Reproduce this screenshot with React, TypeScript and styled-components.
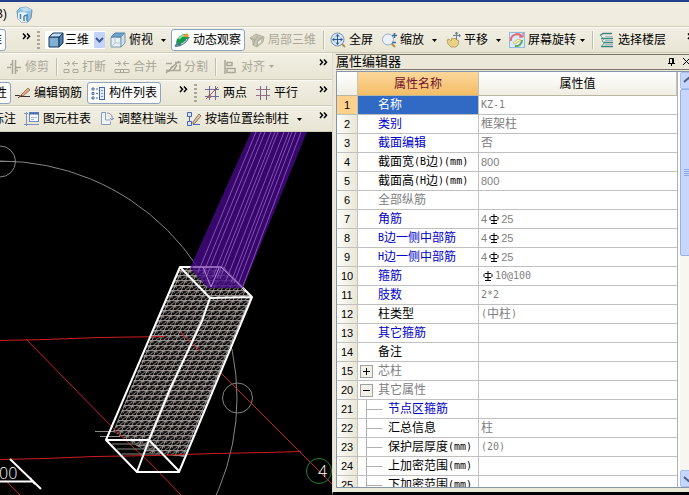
import React from 'react';
import styled, { createGlobalStyle, css } from 'styled-components';

const GlobalStyle = createGlobalStyle`
  * { box-sizing: border-box; }
  html, body { margin: 0; background: #ece9d8; }
  body, button, select, table {
    font-family: "Liberation Sans", "Noto Sans CJK SC", sans-serif;
    font-size: 12px;
    line-height: 16px;
  }
`;

const Page = styled.div`
  height: 100vh;
  display: flex;
  flex-direction: column;
  overflow: hidden;
  color: #000;
  cursor: default;
`;

const MenuBar = styled.header`
  flex: none;
  height: 27px;
  display: flex;
  align-items: center;
  gap: 9px;
  border-top: 2px solid #25418c;
  border-bottom: 1px solid #d2cebc;
  background: #f0ede0;
`;

const Toolbar = styled.div<{ $height?: number }>`
  flex: none;
  height: ${p => p.$height ?? 26}px;
  display: flex;
  align-items: center;
  overflow: hidden;
  border-top: 1px solid #fbfaf4;
  border-bottom: 1px solid #d0ccba;
  background: linear-gradient(#f1efe3, #e8e5d4);
`;

const pressedStyle = css`
  height: 22px;
  padding: 0 3px 0 2px;
  border: 1px solid #8fa3be;
  border-radius: 3px;
  background: #fcfcfb;
`;

const ToolButton = styled.button<{ $before?: number; $pressed?: boolean }>`
  flex: none;
  display: flex;
  align-items: center;
  gap: 3px;
  margin: 0 0 0 ${p => p.$before ?? 0}px;
  padding: 0;
  border: 0;
  background: none;
  color: inherit;
  white-space: nowrap;
  &:disabled { color: #aaa797; }
  ${p => p.$pressed && pressedStyle}
`;

const Cut = styled.div<{ $width: number; $side?: 'start' | 'end' }>`
  flex: none;
  width: ${p => p.$width}px;
  display: flex;
  justify-content: flex-${p => p.$side ?? 'end'};
  overflow: hidden;
  white-space: nowrap;
`;

const Separator = styled.span<{ $before?: number }>`
  flex: none;
  width: 2px;
  height: 18px;
  margin-left: ${p => p.$before ?? 7}px;
  border-left: 1px solid #c2beac;
  border-right: 1px solid #f8f6ee;
`;

const Grip = styled.span<{ $before?: number }>`
  flex: none;
  width: 3px;
  height: 18px;
  margin-left: ${p => p.$before ?? 6}px;
  background: repeating-linear-gradient(#aaa796 0 2px, transparent 2px 4px);
`;

const IconButton = styled.button<{ $before?: number; $end?: boolean }>`
  flex: none;
  display: flex;
  margin: 0 ${p => (p.$end ? 4 : 0)}px 0 ${p => (p.$end ? 'auto' : `${p.$before ?? 8}px`)};
  padding: 0;
  border: 0;
  background: none;
  color: inherit;
  &:disabled { color: #aaa797; }
`;

const MoreButton = styled(IconButton)`
  align-self: flex-start;
  padding-top: 5px;
`;

const ViewPicker = styled.label`
  flex: none;
  height: 18px;
  display: flex;
  align-items: center;
  gap: 1px;
  margin-left: 5px;
  padding-left: 3px;
  background: #fff;
`;

const ViewSelect = styled.select`
  width: 28px;
  height: 18px;
  padding: 0;
  border: 0;
  appearance: none;
  background: none;
  color: inherit;
`;

const Workspace = styled.div`
  flex: 1;
  min-height: 0;
  display: grid;
  grid-template-columns: minmax(0, 332fr) minmax(0, 357fr);
`;

const LeftPane = styled.div`
  display: flex;
  flex-direction: column;
  min-height: 0;
`;

const Viewport = styled.main`
  flex: 1;
  min-height: 0;
  background: #000;
  svg { display: block; width: 100%; height: 100%; }
`;

const RightPane = styled.section`
  min-height: 0;
  display: flex;
  flex-direction: column;
  padding: 1px 0 0 3px;
  border-left: 1px solid #d9dcd4;
  border-bottom: 3px solid #000;
  background: #ece9d8;
`;

const PanelTitle = styled.div`
  flex: none;
  height: 16px;
  display: flex;
  align-items: center;
  border-top: 1px solid #77756c;
  border-bottom: 1px solid #77756c;
  background: #ebe8da;
  overflow: hidden;
`;

const TitleText = styled.h2`
  flex: 1;
  margin: 0;
  font-size: 13px;
  line-height: 14px;
  font-weight: 400;
`;

const Grid = styled.div`
  flex: 1;
  min-height: 0;
  display: flex;
  margin: 1px 0 4px;
  border: 1px solid #8296a8;
  border-right: 0;
  background: #fff;
`;

const TableArea = styled.div`
  flex: 1;
  min-width: 0;
  overflow: hidden;
  border-right: 1px solid #a9b4b8;
`;

const Table = styled.table`
  width: 100%;
  table-layout: fixed;
  border-collapse: separate;
  border-spacing: 0;
`;

const NumberCol = styled.col`width: 21px;`;
const NameCol = styled.col`width: 121px;`;

const HeadCell = styled.th<{ $active?: boolean }>`
  height: 24px;
  padding: 0;
  font-weight: 400;
  border-right: 1px solid #c6c3b4;
  border-bottom: 1px solid #b9b6a6;
  color: ${p => (p.$active ? '#70102c' : '#000')};
  background: ${p => (p.$active ? 'linear-gradient(#fbd79b, #f3bd66)' : 'linear-gradient(#fff, #f0eee3)')};
`;

const NumberCell = styled.th<{ $active?: boolean }>`
  height: 19px;
  padding: 0;
  font: 400 11px/16px "Liberation Sans", sans-serif;
  border-right: 1px solid #c6c3b4;
  border-bottom: 1px solid #c0c0bc;
  background: ${p => (p.$active ? '#fdd08c' : 'linear-gradient(90deg, #fdfdfa, #e9e6d6)')};
`;

type Tone = 'key' | 'plain' | 'group' | 'selected';
const toneColor: Record<Tone, string> = {
  key: '#0000c8',
  plain: '#000',
  group: '#808080',
  selected: '#fff',
};

const NameCell = styled.td<{ $tone: Tone }>`
  height: 19px;
  padding: 0;
  white-space: nowrap;
  border-right: 1px solid #c0c0c0;
  border-bottom: 1px solid #c0c0c0;
  color: ${p => toneColor[p.$tone]};
  background: ${p => (p.$tone === 'selected' ? '#316ac5' : '#fff')};
`;

const CellLine = styled.div`
  height: 18px;
  display: flex;
  align-items: center;
`;

const TreeSlot = styled.span<{ $child?: boolean }>`
  flex: none;
  display: flex;
  align-items: center;
  width: ${p => (p.$child ? 30 : 20)}px;
  height: 18px;
  padding-left: 2px;
`;

const Toggle = styled.button`
  width: 13px;
  height: 13px;
  display: flex;
  padding: 0;
  border: 1px solid #a0a0a0;
  background: #f1f0ea;
`;

const ValueCell = styled.td`
  height: 19px;
  padding: 0 0 0 2px;
  white-space: nowrap;
  color: #808080;
  border-bottom: 1px solid #c0c0c0;
`;

const Latin = styled.span`
  font-family: "DejaVu Sans Mono", monospace;
  font-size: 10px;
`;

const Digits = styled.span`
  font-family: "Liberation Sans", sans-serif;
  font-size: 11px;
`;

const ScrollStrip = styled.div`
  flex: none;
  width: 11px;
  display: flex;
  flex-direction: column;
  padding: 0 0 0 2px;
  overflow: hidden;
`;

const ScrollTrack = styled.div`
  flex: 1;
  width: 17px;
  display: flex;
  flex-direction: column;
  background: #f7f6f1;
`;

const ScrollButton = styled.button`
  width: 17px;
  height: 17px;
  flex: none;
  display: flex;
  padding: 0;
  border: 1px solid #a9bdf0;
  border-radius: 2px;
  background: #c6d5fd;
`;

const ScrollThumb = styled.div`
  width: 17px;
  height: 42%;
  display: flex;
  align-items: center;
  padding-left: 3px;
  border: 1px solid #98b1e4;
  border-radius: 2px;
  background: #c8d6fb;
`;

/* ---------- icons ---------- */

const Icon = ({ children }: { children: React.ReactNode }) => (
  <svg width="16" height="16" viewBox="0 0 16 16" fill="none" stroke="currentColor" aria-hidden="true">
    {children}
  </svg>
);

const Caret = () => (
  <svg width="5" height="3" viewBox="0 0 5 3" aria-hidden="true"><path d="M0 0h5L2.500 3z" fill="currentColor" /></svg>
);

const Chevrons = () => (
  <svg width="9" height="7" viewBox="0 0 9 7" fill="none" stroke="#000" strokeWidth="1.500" aria-hidden="true">
    <path d="M1 .5l2.500 2.700L1 6M5 .5l2.500 2.700L5 6" />
  </svg>
);

const HouseIcon = () => (
  <svg width="17" height="17" viewBox="0 0 17 17" aria-hidden="true">
    <path d="M1 5l3-3 6-1 6 3-1 8-3 4H5l-3-3z" fill="#8fc1e2" stroke="#6a93b2" />
    <path d="M4 2l4 4 8-2-6-3z" fill="#b9dcf1" />
    <path d="M2 7l4-1 5 1v9H5l-3-3z" fill="#e5f4fc" />
    <path d="M4.500 8v5M8 10v5M8 10l3-1v6" fill="none" stroke="#4e7fa6" strokeWidth="1.500" />
  </svg>
);

const SolidCube = () => (
  <Icon>
    <path d="M1 5h10v10H1z" fill="#84aed2" stroke="#12395e" />
    <path d="M1 5l4-4h10l-4 4z" fill="#c1dcf1" stroke="#12395e" />
    <path d="M11 5l4-4v10l-4 4z" fill="#4c7eaa" stroke="#12395e" />
  </Icon>
);

const GlassCube = () => (
  <Icon>
    <path d="M1 5h10v10H1z" fill="#e8f0f5" stroke="#7b98ae" />
    <path d="M1 5l4-4h10l-4 4z" fill="#6aa5d2" stroke="#4c7ea6" />
    <path d="M11 5l4-4v10l-4 4z" fill="#d1e0ea" stroke="#7b98ae" />
    <path d="M5 5v6l-4 4M5 11h6" stroke="#b5c6d2" />
  </Icon>
);

const OrbitIcon = () => (
  <Icon>
    <path d="M3 13C0 9 6 2 11 2c4 0 4 5 1 8s-7 5-9 3z" fill="#15994a" stroke="none" />
    <path d="M5 7c2-3 5-4 7-3" stroke="#8fe0a0" strokeWidth="2" />
    <path d="M1 14c5 1 12-4 14-9M1 14l4-4" stroke="#5878a0" strokeWidth="1.500" />
    <path d="M7 12c3-1 5-3 6-5" stroke="#d9e6f4" />
    <circle cx="12.500" cy="3.500" r="2" fill="#f0941c" stroke="none" />
  </Icon>
);

const PartialIcon = () => (
  <Icon>
    <path d="M1 6l6-4 8 3-1 5-6 5-4-2V9z" fill="#c9c6b8" stroke="#b2af9f" />
    <path d="M1 6l5 2 3-4M6 8l-2 5M9 8l5-3M8 15l1-7" stroke="#b2af9f" strokeWidth="1.500" />
    <path d="M9 10l3-2v2l-3 2z" fill="#f2f0e6" stroke="none" />
  </Icon>
);

const FullViewIcon = () => (
  <Icon>
    <path d="M12 12l3 3" stroke="#b58e4c" strokeWidth="2" />
    <circle cx="7.500" cy="7.500" r="6.500" fill="#d7e7f8" stroke="#7292b6" />
    <path d="M7.500 3v9M3 7.500h9M6 4.500l1.500-2L9 4.500M6 10.500l1.500 2 1.500-2M4.500 6l-2 1.500 2 1.500M10.500 6l2 1.500-2 1.500" stroke="#2c5795" />
  </Icon>
);

const ZoomIcon = () => (
  <Icon>
    <path d="M10 11l4 4" stroke="#b58e4c" strokeWidth="2" />
    <circle cx="7" cy="7.500" r="5.500" fill="#e9f2fa" stroke="#9babbd" />
    <path d="M11 3.500h5M13.500 1v5M11 10.500h4" stroke="#426ba5" strokeWidth="1.500" />
  </Icon>
);

const PanIcon = () => (
  <Icon>
    <path d="M2 8l2-1 2 2 1-3 2 1 1-1 2 2 2 1-1 4-2 2H6l-3-3z" fill="#ead184" stroke="#b9a468" />
    <path d="M11.500 0v8M8 3.500h7M10 2l1.500-2L13 2M14 2l1.500 1.500L14 5" stroke="#6f7e91" />
  </Icon>
);

const RotateIcon = () => (
  <Icon>
    <rect x=".5" y=".5" width="15" height="15" fill="#d8ebfa" stroke="#91b9dc" />
    <path d="M2 9a6 6 0 0 1 11-4" stroke="#e16a75" strokeWidth="2" />
    <path d="M13 8a6 6 0 0 1-7 6" stroke="#63a863" strokeWidth="2" />
    <path d="M10 5h4V1" stroke="#d34f60" />
    <path d="M4 11l5-4 3 1-6 4z" fill="#fff4b0" stroke="#d8c274" />
  </Icon>
);

const FloorsIcon = () => (
  <Icon>
    <path d="M1 3.500l3-2h9M2 6.500h12M4 10.500h10M2 14.500h12" stroke="#3f8480" strokeWidth="1.500" />
    <path d="M2 4l3 3-2 2 2 2-2 3" stroke="#66a6a1" />
    <path d="M6 4.500h8M6 8.500h8M6 12.500h8" stroke="#9dbac8" />
  </Icon>
);

const TrimIcon = () => <Icon><path d="M1 8.500h4M10 8.500h5M6.500 1v14M9.500 1v14M4 5.500h3M9 11.500h3" strokeWidth="1.500" /></Icon>;
const BreakIcon = () => <Icon><path d="M1 4.500h5M4 2l3 2.500L4 7M15 4.500h-5M12 2L9 4.500 12 7M1 10.500h5v3H1zM10 10.500h5v3h-5z" /></Icon>;
const JoinIcon = () => <Icon><path d="M1 4.500h5M4 2l3 2.500L4 7M15 4.500h-5M12 2L9 4.500 12 7M1 10.500h14v3H1zM6.500 10v4M9.500 10v4" /></Icon>;
const SplitIcon = () => <Icon><path d="M1 4.500h6M1 11.500h14v-6M10 3.500h6M1 14L14 2M4 13l3-6M8 12l4-6" strokeWidth="1.500" /></Icon>;
const AlignIcon = () => <Icon><path d="M3 1v14M5 3.500h5v3H5zM5 9.500h8v4H5z" strokeWidth="1.500" /></Icon>;

const EditRebarIcon = () => (
  <Icon>
    <path d="M0 10.500h4l2 1h9" stroke="#333" />
    <path d="M6 10l7-7 2 2-7 6z" fill="#dcaf83" stroke="#a37c68" />
    <path d="M3 13l4-3" stroke="#803030" />
  </Icon>
);

const ListIcon = () => (
  <Icon>
    <path d="M2 3h2v2H2zM2 7.500h2v2H2zM2 12h2v2H2z" stroke="#466aa6" />
    <path d="M6 4h2M6 8.500h2M6 13h2" stroke="#466aa6" />
    <rect x="9.500" y="2.500" width="5" height="12" fill="#e2edfb" stroke="#466aa6" />
    <path d="M11 5.500h2M11 8.500h2M11 11.500h2" stroke="#7897ca" />
  </Icon>
);

const TwoPointIcon = () => (
  <Icon>
    <path d="M5.500 1v14M11.500 1v14M1 4.500h14M1 11.500h14" stroke="#6c6c9c" />
    <path d="M2 14L14 2" stroke="#9c5a4e" />
    <path d="M4.500 10.500h2v2h-2z" stroke="#9a6a5e" />
  </Icon>
);

const ParallelIcon = () => (
  <Icon>
    <path d="M5.500 1v14M11.500 1v14" stroke="#6c6c9c" />
    <path d="M1 4.500h14M1 10.500h14" stroke="#986c82" />
  </Icon>
);

const ColumnTableIcon = () => (
  <Icon>
    <path d="M2.500 1v14M0 2.500h4M0 13.500h15" stroke="#7d8fbd" />
    <rect x="5.500" y="1.500" width="9" height="9" fill="#f7faff" stroke="#6d8ac6" />
    <path d="M5 2.500h10" stroke="#4c6cae" strokeWidth="2" />
    <path d="M7 6.500h6M7 8.500h3" stroke="#a8b9dc" />
  </Icon>
);

const ColumnEndIcon = () => (
  <Icon>
    <path d="M6 1.500H2.500v12h9v-3" fill="#f0f3fa" stroke="#8c9cc4" />
    <path d="M6.500 1v8h5" stroke="#8c9cc4" />
    <path d="M8 2c4 0 6 3 5 7M11 7l2 2 2-2" stroke="#8592b6" />
  </Icon>
);

const WallColumnIcon = () => (
  <Icon>
    <path d="M1.500 1.500h4v4h-4zM1.500 10.500h4v4h-4z" fill="#dbe6fa" stroke="#4466b2" />
    <path d="M3.500 6v4M7 13.500h7" stroke="#4466b2" />
    <path d="M7 11l6-8 2 2-6 7-2 1z" fill="#e0c5a4" stroke="#8d7264" />
  </Icon>
);

const PinIcon = () => (
  <svg width="7" height="8" viewBox="0 0 7 8" fill="none" stroke="#000" aria-hidden="true">
    <path d="M1.500 5V.5h4V5M4.500 0v5M0 5.500h7M3.500 5v3" />
  </svg>
);

const CloseIcon = () => (
  <svg width="8" height="8" viewBox="0 0 8 8" stroke="#000" aria-hidden="true"><path d="M0 0l7 7M7 0L0 7" /></svg>
);

const RebarMark = styled.svg`
  flex: none;
  margin: 0 2px;
`;

const Rebar = () => (
  <RebarMark width="10" height="10" viewBox="0 0 10 10" fill="none" stroke="#000" role="img" aria-label="HRB335">
    <path d="M2 2.500h6l1 1v2l-1 1H2l-1-1v-2zM5 0v9M2 9.500h6" />
  </RebarMark>
);

/* ---------- building blocks ---------- */

interface ToolProps {
  icon: React.ReactNode;
  label: string;
  before?: number;
  pressed?: boolean;
  disabled?: boolean;
}

const Tool = ({ icon, label, before, pressed, disabled }: ToolProps) => (
  <ToolButton type="button" $before={before} $pressed={pressed} aria-pressed={pressed} disabled={disabled}>
    {icon}
    <span>{label}</span>
  </ToolButton>
);

const Drop = ({ before, label, disabled }: { before?: number; label: string; disabled?: boolean }) => (
  <IconButton type="button" $before={before} aria-label={label} disabled={disabled}><Caret /></IconButton>
);

const More = ({ before, end }: { before?: number; end?: boolean }) => (
  <MoreButton type="button" $before={before} $end={end} aria-label="更多"><Chevrons /></MoreButton>
);

const MixedText = ({ text }: { text: string }) => (
  <>
    {text.split(/([\x20-\x7e]+|Φ)/).map((part, i) => {
      if (part === 'Φ') return <Rebar key={i} />;
      if (/^\d+$/.test(part)) return <Digits key={i}>{part}</Digits>;
      return i % 2 ? <Latin key={i}>{part}</Latin> : <span key={i}>{part}</span>;
    })}
  </>
);

interface Property {
  no: number;
  name: string;
  value?: string;
  tone: Tone;
  toggle?: 'open' | 'closed';
  child?: boolean;
}

const properties: Property[] = [
  { no: 1, name: '名称', value: 'KZ-1', tone: 'selected' },
  { no: 2, name: '类别', value: '框架柱', tone: 'key' },
  { no: 3, name: '截面编辑', value: '否', tone: 'key' },
  { no: 4, name: '截面宽(B边)(mm)', value: '800', tone: 'plain' },
  { no: 5, name: '截面高(H边)(mm)', value: '800', tone: 'plain' },
  { no: 6, name: '全部纵筋', tone: 'group' },
  { no: 7, name: '角筋', value: '4Φ25', tone: 'key' },
  { no: 8, name: 'B边一侧中部筋', value: '4Φ25', tone: 'key' },
  { no: 9, name: 'H边一侧中部筋', value: '4Φ25', tone: 'key' },
  { no: 10, name: '箍筋', value: 'Φ10@100', tone: 'key' },
  { no: 11, name: '肢数', value: '2*2', tone: 'key' },
  { no: 12, name: '柱类型', value: '(中柱)', tone: 'plain' },
  { no: 13, name: '其它箍筋', tone: 'key' },
  { no: 14, name: '备注', tone: 'plain' },
  { no: 15, name: '芯柱', tone: 'group', toggle: 'closed' },
  { no: 20, name: '其它属性', tone: 'group', toggle: 'open' },
  { no: 21, name: '节点区箍筋', tone: 'key', child: true },
  { no: 22, name: '汇总信息', value: '柱', tone: 'plain', child: true },
  { no: 23, name: '保护层厚度(mm)', value: '(20)', tone: 'plain', child: true },
  { no: 24, name: '上加密范围(mm)', tone: 'plain', child: true },
  { no: 25, name: '下加密范围(mm)', tone: 'plain', child: true },
];

const PropertyRow = ({ item }: { item: Property }) => (
  <tr>
    <NumberCell scope="row" $active={item.tone === 'selected'}>{item.no}</NumberCell>
    <NameCell $tone={item.tone}>
      <CellLine>
        <TreeSlot $child={item.child}>
          {item.toggle && (
            <Toggle type="button" aria-label={item.name} aria-expanded={item.toggle === 'open'}>
              <svg width="11" height="11" viewBox="0 0 11 11" stroke="#000" aria-hidden="true">
                <path d={item.toggle === 'open' ? 'M2 5.500h7' : 'M2 5.500h7M5.500 2v7'} />
              </svg>
            </Toggle>
          )}
          {item.child && (
            <svg width="24" height="18" viewBox="0 0 24 18" fill="none" stroke="#b0b0b0" aria-hidden="true">
              <path d="M6.500 0v18M6.500 9.500h16" />
            </svg>
          )}
        </TreeSlot>
        <MixedText text={item.name} />
      </CellLine>
    </NameCell>
    <ValueCell><CellLine><MixedText text={item.value ?? ''} /></CellLine></ValueCell>
  </tr>
);

const beamStrands = [5, 10, 14, 20, 24, 27, 33, 38, 41, 45, 50];

const Scene = () => (
  <svg viewBox="0 132 332 363" preserveAspectRatio="xMinYMin slice" fill="none" role="img" aria-label="三维视图">
    <defs>
      <pattern id="mesh" width="8" height="5" patternUnits="userSpaceOnUse" patternTransform="skewX(-23)">
        <path d="M0 .5h8M.5 0v5M4 5L8 1M1 1l2 2" stroke="#9d9592" />
      </pattern>
    </defs>
    <g stroke="#858585">
      <circle cx="0" cy="398" r="237" />
      <circle cx="0" cy="161.500" r="15.500" />
      <circle cx="237.500" cy="398" r="15" />
      <path d="M0 161.500h16" />
    </g>
    <path d="M180 266h42l30 31-69 160-35-3-40-21z" fill="#000" />
    <path d="M180 266h42l30 31-68 160-35-4-36-21z" fill="url(#mesh)" />
    <g stroke="#cf1c22">
      <path d="M0 340.500l45-1 55-2 65-1M0 459.500l45-1 50-2 60-1 60-2 50-1 36-1" />
      <path d="M26 339l86 88 40 38 29 30M221 373l111 111M180 332l20 19M5 480l15 15" />
    </g>
    <path d="M95 431.500h19M100 436.500h20M112 444h42M117 449h38M122 454h38" stroke="#8a8a84" />
    <g stroke="#fff" strokeWidth="2" strokeLinejoin="round">
      <path d="M222 267h-42L106 440l31 32h42l73-175-42 1-30-31M222 267l30 30" />
      <path d="M106 440h43l30 31M210 298l-8 23-32 68-21 51-12 32" />
      <path d="M0 481.500h34M10 459l31 30M30 478l5 6" />
    </g>
    <path d="M251 132h56l-64 156h-35l-18-20z" fill="#46098a" fillOpacity=".78" />
    <g stroke="#8450b4">
      {beamStrands.map(x => (
        <path key={x} d={`M${251 + x} 132L${193 + x} ${271 + x * 0.3}`} />
      ))}
    </g>
    <path d="M193 267h28l24 23M203 267l8 20 8-19" stroke="#b58ad2" />
    <circle cx="319" cy="471" r="12.500" stroke="#208238" />
    <g fill="#fff" fontFamily="Open Sans, sans-serif" fontWeight="300" fontSize="16">
      <text x="-1" y="479">00</text>
      <text x="318" y="477">4</text>
    </g>
  </svg>
);

export default function App() {
  return (
    <Page>
      <GlobalStyle />
      <MenuBar>
        <Cut $width={7}>(B)</Cut>
        <HouseIcon />
      </MenuBar>
      <Toolbar>
        <Cut $width={6}><ToolButton type="button" $pressed>二维</ToolButton></Cut>
        <More before={16} />
        <Grip />
        <ViewPicker>
          <SolidCube />
          <ViewSelect aria-label="视图模式" defaultValue="三维">
            <option>三维</option>
          </ViewSelect>
          <svg width="11" height="18" viewBox="0 0 11 18" fill="none" aria-hidden="true">
            <rect y="1" width="11" height="16" rx="1" fill="#c4d3f8" />
            <path d="M2 7l3.500 3.500L9 7" stroke="#405c91" strokeWidth="2" />
          </svg>
        </ViewPicker>
        <Tool icon={<GlassCube />} label="俯视" before={5} />
        <Drop label="俯视选项" />
        <Tool icon={<OrbitIcon />} label="动态观察" before={5} pressed />
        <Tool icon={<PartialIcon />} label="局部三维" before={4} disabled />
        <Separator />
        <Tool icon={<FullViewIcon />} label="全屏" before={5} />
        <Tool icon={<ZoomIcon />} label="缩放" before={8} />
        <Drop label="缩放选项" />
        <Tool icon={<PanIcon />} label="平移" before={8} />
        <Drop label="平移选项" />
        <Tool icon={<RotateIcon />} label="屏幕旋转" before={8} />
        <Drop label="旋转选项" before={4} />
        <Separator />
        <Tool icon={<FloorsIcon />} label="选择楼层" before={5} />
        <More before={21} />
      </Toolbar>
      <Workspace>
        <LeftPane>
          <Toolbar $height={27}>
            <Tool icon={<TrimIcon />} label="修剪" before={6} disabled />
            <Separator />
            <Tool icon={<BreakIcon />} label="打断" before={5} disabled />
            <Tool icon={<JoinIcon />} label="合并" before={8} disabled />
            <Tool icon={<SplitIcon />} label="分割" before={8} disabled />
            <Separator />
            <Tool icon={<AlignIcon />} label="对齐" before={5} disabled />
            <Drop label="对齐选项" before={4} disabled />
            <More end />
          </Toolbar>
          <Toolbar>
            <Cut $width={11}><ToolButton type="button" $pressed>属性</ToolButton></Cut>
            <Tool icon={<EditRebarIcon />} label="编辑钢筋" before={4} />
            <Tool icon={<ListIcon />} label="构件列表" before={5} pressed />
            <More before={18} />
            <Grip before={5} />
            <Tool icon={<TwoPointIcon />} label="两点" before={7} />
            <Tool icon={<ParallelIcon />} label="平行" before={8} />
            <More end />
          </Toolbar>
          <Toolbar>
            <Cut $width={16}><ToolButton type="button">标注</ToolButton></Cut>
            <Tool icon={<ColumnTableIcon />} label="图元柱表" before={8} />
            <Tool icon={<ColumnEndIcon />} label="调整柱端头" before={8} />
            <Tool icon={<WallColumnIcon />} label="按墙位置绘制柱" before={8} />
            <Drop label="绘制选项" />
            <More end />
          </Toolbar>
          <Viewport><Scene /></Viewport>
        </LeftPane>
        <RightPane>
          <PanelTitle>
            <TitleText>属性编辑器</TitleText>
            <IconButton type="button" aria-label="固定"><PinIcon /></IconButton>
            <Cut $width={14} $side="start">
              <IconButton type="button" aria-label="关闭"><CloseIcon /></IconButton>
            </Cut>
          </PanelTitle>
          <Grid>
            <TableArea>
              <Table>
                <colgroup><NumberCol /><NameCol /><col /></colgroup>
                <thead>
                  <tr>
                    <HeadCell aria-label="序号" />
                    <HeadCell scope="col" $active>属性名称</HeadCell>
                    <HeadCell scope="col">属性值</HeadCell>
                  </tr>
                </thead>
                <tbody>
                  {properties.map(item => <PropertyRow key={item.no} item={item} />)}
                </tbody>
              </Table>
            </TableArea>
            <ScrollStrip>
              <ScrollTrack>
                <ScrollButton type="button" aria-label="向上滚动">
                  <svg width="15" height="15" viewBox="0 0 15 15" fill="none" stroke="#4d6185" strokeWidth="2"><path d="M3 9l4.500-4L12 9" /></svg>
                </ScrollButton>
                <ScrollThumb>
                  <svg width="9" height="8" viewBox="0 0 9 8" stroke="#8ca8e8"><path d="M0 .5h8M0 2.500h8M0 4.500h8M0 6.500h8" /></svg>
                </ScrollThumb>
              </ScrollTrack>
              <ScrollButton type="button" aria-label="向下滚动">
                <svg width="15" height="15" viewBox="0 0 15 15" fill="none" stroke="#4d6185" strokeWidth="2"><path d="M3 6l4.500 4L12 6" /></svg>
              </ScrollButton>
            </ScrollStrip>
          </Grid>
        </RightPane>
      </Workspace>
    </Page>
  );
}
